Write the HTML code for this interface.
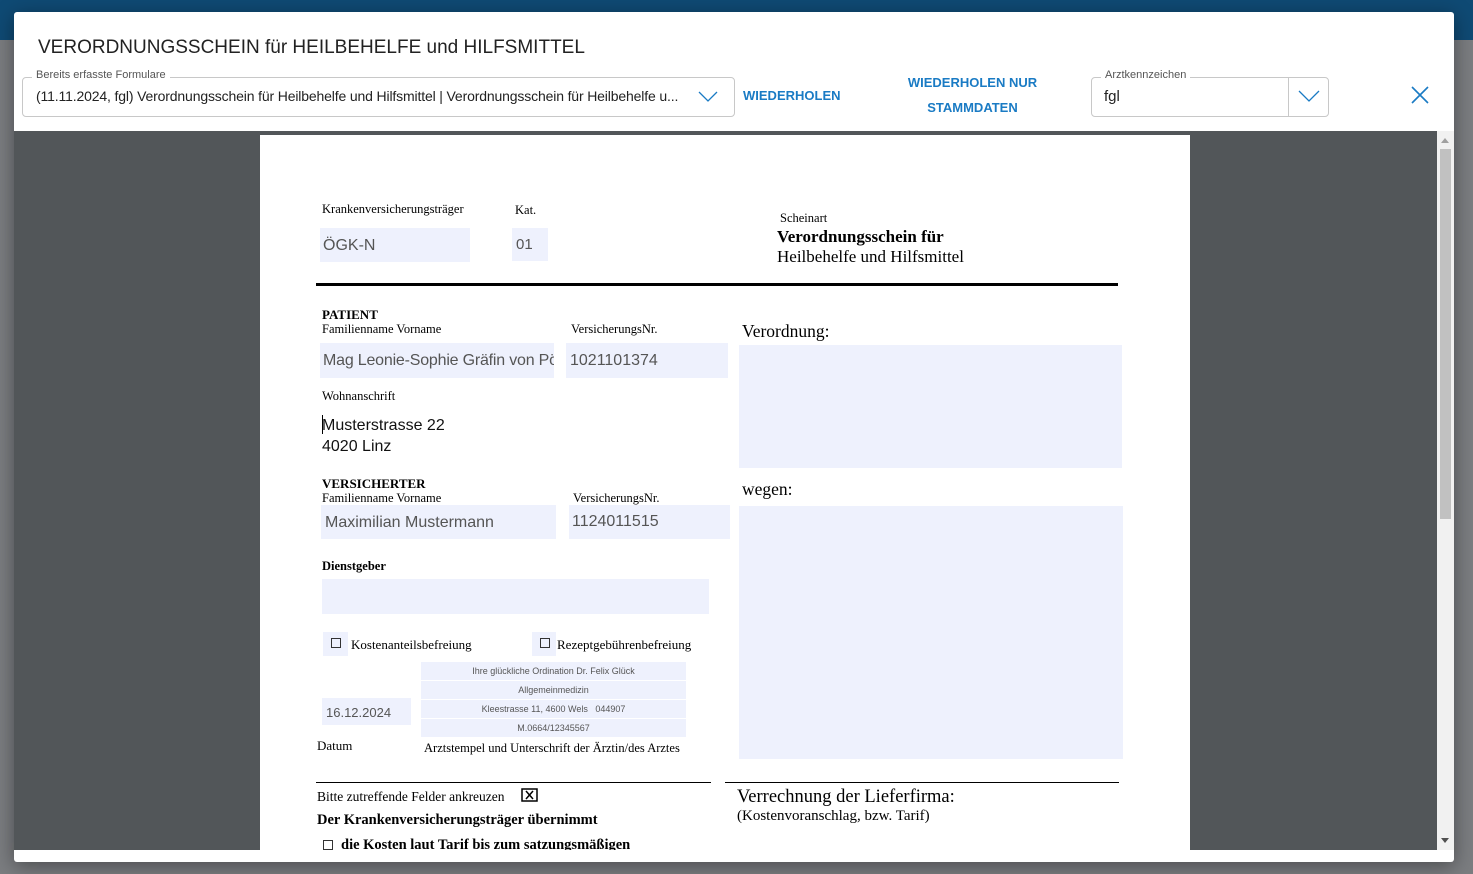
<!DOCTYPE html>
<html><head><meta charset="utf-8"><style>
*{margin:0;padding:0;box-sizing:border-box}
body{width:1473px;height:874px;overflow:hidden;background:#7b7d80;font-family:"Liberation Sans",sans-serif;position:relative}
.a{position:absolute}
.topbar{left:0;top:0;width:1473px;height:40px;background:#0f4a74}
.dlg{left:14px;top:12px;width:1440px;height:850px;background:#fff;border-radius:3px;box-shadow:0 4px 20px rgba(0,0,0,.4)}
.viewer{left:14px;top:131px;width:1423px;height:719px;background:#525659;overflow:hidden}
.sb{left:1437px;top:131px;width:17px;height:719px;background:#f1f1f1}
.page{left:260px;top:135px;width:930px;height:715px;background:#fff;overflow:hidden}
.s{font-family:"Liberation Serif",serif;color:#000}
.f{background:#eef1fd;font-family:"Liberation Sans",sans-serif;color:#555;font-size:15px}
.fl{border:1px solid #c8c8c8;border-radius:4px}
.lbl{font-size:11px;color:#555;background:#fff;padding:0 4px}
.btn{color:#1a7bc4;font-size:13.5px;font-weight:bold;letter-spacing:0;text-align:center;line-height:25px}
.stamp div{height:18px;margin-bottom:1px;background:#eef1fd;font-size:9px;color:#555;text-align:center;line-height:18px}
.cb{width:10px;height:10px;border:1.5px solid #333}
</style></head><body>
<div class="a topbar"></div>
<div class="a dlg"></div>
<div class="a" style="left:38px;top:37px;font-size:19px;color:#222">VERORDNUNGSSCHEIN für HEILBEHELFE und HILFSMITTEL</div>
<div class="a fl" style="left:22px;top:77px;width:713px;height:40px"></div>
<div class="a lbl" style="left:32px;top:69px">Bereits erfasste Formulare</div>
<div class="a" style="left:36px;top:88px;width:660px;font-size:14px;letter-spacing:-0.15px;color:#222;white-space:nowrap;overflow:hidden">(11.11.2024, fgl) Verordnungsschein für Heilbehelfe und Hilfsmittel | Verordnungsschein für Heilbehelfe u...</div>
<svg class="a" style="left:698px;top:89px" width="20" height="14"><path d="M1 3 L10 12 L19 3" fill="none" stroke="#1a7bc4" stroke-width="1.3"/></svg>
<div class="a btn" style="left:743px;top:83px;font-size:13px">WIEDERHOLEN</div>
<div class="a btn" style="left:900px;top:70px;width:145px;font-size:13px">WIEDERHOLEN NUR<br>STAMMDATEN</div>
<div class="a fl" style="left:1091px;top:77px;width:238px;height:40px"></div>
<div class="a" style="left:1288px;top:78px;width:1px;height:38px;background:#c8c8c8"></div>
<div class="a lbl" style="left:1101px;top:69px">Arztkennzeichen</div>
<div class="a" style="left:1104px;top:88px;font-size:15px;color:#222">fgl</div>
<svg class="a" style="left:1298px;top:89px" width="22" height="14"><path d="M1 2 L11 12 L21 2" fill="none" stroke="#1a7bc4" stroke-width="1.3"/></svg>
<svg class="a" style="left:1411px;top:86px" width="18" height="18"><path d="M1 1 L17 17 M17 1 L1 17" stroke="#1a7bc4" stroke-width="1.6"/></svg>
<div class="a viewer"></div>
<div class="a sb"><div class="a" style="left:3px;top:18px;width:11px;height:370px;background:#c1c1c1"></div>
<div class="a" style="left:4px;top:7px;border-left:4px solid transparent;border-right:4px solid transparent;border-bottom:5px solid #a0a0a0"></div>
<div class="a" style="left:4px;top:707px;border-left:4px solid transparent;border-right:4px solid transparent;border-top:5px solid #505050"></div></div>
<div class="a page">
<div class="a s" style="left:62px;top:67px;font-size:12.5px">Krankenversicherungsträger</div>
<div class="a s" style="left:255px;top:68px;font-size:12.5px">Kat.</div>
<div class="a f" style="left:60px;top:93px;width:150px;height:34px;padding:9px 3px;font-size:16px">ÖGK-N</div>
<div class="a f" style="left:252px;top:93px;width:36px;height:33px;padding:8px 4px;font-size:15px">01</div>
<div class="a s" style="left:520px;top:76px;font-size:12.5px">Scheinart</div>
<div class="a s" style="left:517px;top:92px;font-size:17px;font-weight:bold">Verordnungsschein für</div>
<div class="a s" style="left:517px;top:112px;font-size:17px">Heilbehelfe und Hilfsmittel</div>
<div class="a" style="left:56px;top:148px;width:802px;height:3px;background:#000"></div>
<div class="a s" style="left:62px;top:172px;font-size:13px;font-weight:bold">PATIENT</div>
<div class="a s" style="left:62px;top:187px;font-size:12.5px">Familienname Vorname</div>
<div class="a s" style="left:311px;top:187px;font-size:12.5px">VersicherungsNr.</div>
<div class="a f" style="left:60px;top:208px;width:234px;height:35px;padding:9px 3px;font-size:16px;letter-spacing:-0.2px;white-space:nowrap;overflow:hidden">Mag Leonie-Sophie Gräfin von Pöllnitz</div>
<div class="a f" style="left:306px;top:208px;width:162px;height:35px;padding:9px 4px;font-size:16px">1021101374</div>
<div class="a s" style="left:62px;top:254px;font-size:12.5px">Wohnanschrift</div>
<div class="a" style="left:62px;top:280px;width:1px;height:19px;background:#000"></div>
<div class="a" style="left:62px;top:280px;font-size:16px;line-height:21px;color:#111">Musterstrasse 22<br>4020 Linz</div>
<div class="a s" style="left:482px;top:186px;font-size:17.5px">Verordnung:</div>
<div class="a f" style="left:479px;top:210px;width:383px;height:123px"></div>
<div class="a s" style="left:62px;top:341px;font-size:13px;font-weight:bold">VERSICHERTER</div>
<div class="a s" style="left:62px;top:356px;font-size:12.5px">Familienname Vorname</div>
<div class="a s" style="left:313px;top:356px;font-size:12.5px">VersicherungsNr.</div>
<div class="a f" style="left:61px;top:370px;width:235px;height:34px;padding:9px 4px;font-size:16px">Maximilian Mustermann</div>
<div class="a f" style="left:309px;top:370px;width:161px;height:34px;padding:8px 3px;font-size:16px">1124011515</div>
<div class="a s" style="left:482px;top:344px;font-size:17.5px">wegen:</div>
<div class="a f" style="left:479px;top:371px;width:384px;height:253px"></div>
<div class="a s" style="left:62px;top:424px;font-size:12.5px;font-weight:bold">Dienstgeber</div>
<div class="a f" style="left:62px;top:444px;width:387px;height:35px"></div>
<div class="a f" style="left:63px;top:497px;width:25px;height:24px"></div>
<div class="a cb" style="left:71px;top:503px"></div>
<div class="a s" style="left:91px;top:502px;font-size:13px">Kostenanteilsbefreiung</div>
<div class="a f" style="left:272px;top:497px;width:24px;height:24px"></div>
<div class="a cb" style="left:280px;top:503px"></div>
<div class="a s" style="left:297px;top:502px;font-size:13px">Rezeptgebührenbefreiung</div>
<div class="a stamp" style="left:161px;top:527px;width:265px"><div>Ihre glückliche Ordination Dr. Felix Glück</div><div>Allgemeinmedizin</div><div>Kleestrasse 11, 4600 Wels &nbsp; 044907</div><div>M.0664/12345567</div></div>
<div class="a f" style="left:62px;top:563px;width:89px;height:27px;padding:7px 4px;font-size:13px">16.12.2024</div>
<div class="a s" style="left:57px;top:603px;font-size:13px">Datum</div>
<div class="a s" style="left:164px;top:606px;font-size:12.5px">Arztstempel und Unterschrift der Ärztin/des Arztes</div>
<div class="a" style="left:56px;top:647px;width:395px;height:1px;background:#000"></div>
<div class="a" style="left:465px;top:647px;width:394px;height:1px;background:#000"></div>
<div class="a s" style="left:57px;top:654px;font-size:13.5px">Bitte zutreffende Felder ankreuzen</div>
<svg class="a" style="left:261px;top:653px" width="18" height="14"><rect x="1" y="1" width="15" height="12" fill="none" stroke="#000" stroke-width="1.5"/><path d="M5 3 L12 11 M12 3 L5 11" stroke="#000" stroke-width="1.5"/></svg>
<div class="a s" style="left:57px;top:677px;font-size:14.5px;font-weight:bold">Der Krankenversicherungsträger übernimmt</div>
<div class="a cb" style="left:63px;top:705px"></div>
<div class="a s" style="left:81px;top:702px;font-size:14.5px;font-weight:bold">die Kosten laut Tarif bis zum satzungsmäßigen</div>
<div class="a s" style="left:477px;top:652px;font-size:18.5px">Verrechnung der Lieferfirma:</div>
<div class="a s" style="left:477px;top:673px;font-size:15px">(Kostenvoranschlag, bzw. Tarif)</div>
</div>
</body></html>
